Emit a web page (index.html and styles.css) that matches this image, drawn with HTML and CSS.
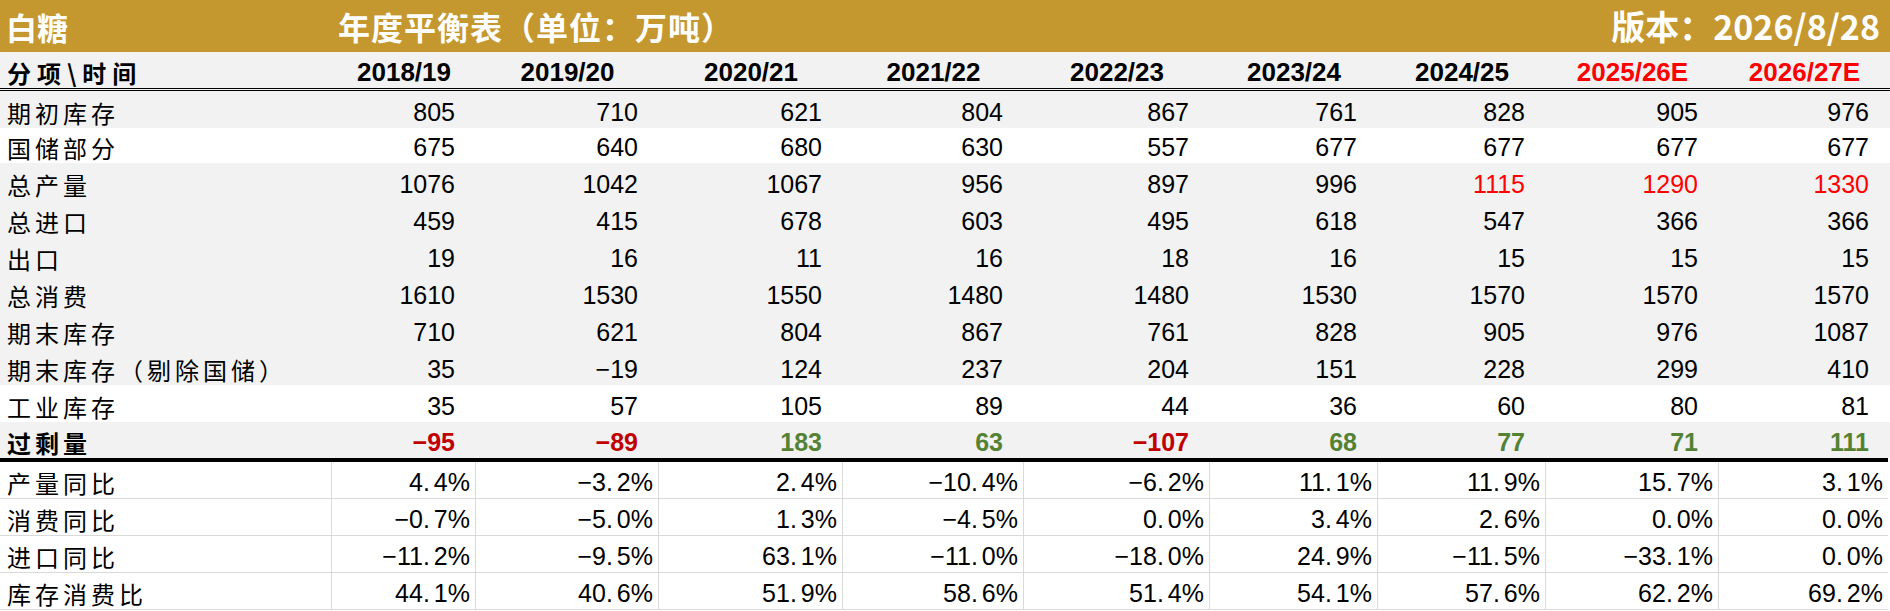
FILE: index.html
```html
<!DOCTYPE html>
<html lang="zh-CN">
<head>
<meta charset="utf-8">
<title>白糖 年度平衡表</title>
<link rel="stylesheet" href="styles.css">
</head>
<body>
<div class="sheet">
  <div class="banner">
    <span class="b-name">白糖</span>
    <span class="b-title">年度平衡表（单位：万吨）</span>
    <span class="b-ver">版本：2026/8/28</span>
  </div>

  <div class="row head">
    <div class="cell lbl">分项\时间</div>
    <div class="cell yr">2018/19</div>
    <div class="cell yr">2019/20</div>
    <div class="cell yr">2020/21</div>
    <div class="cell yr">2021/22</div>
    <div class="cell yr">2022/23</div>
    <div class="cell yr">2023/24</div>
    <div class="cell yr">2024/25</div>
    <div class="cell yr red">2025/26E</div>
    <div class="cell yr red">2026/27E</div>
  </div>

  <div class="row gray">
    <div class="cell lbl">期初库存</div>
    <div class="cell num">805</div><div class="cell num">710</div><div class="cell num">621</div><div class="cell num">804</div><div class="cell num">867</div><div class="cell num">761</div><div class="cell num">828</div><div class="cell num">905</div><div class="cell num">976</div>
  </div>
  <div class="row white short">
    <div class="cell lbl">国储部分</div>
    <div class="cell num">675</div><div class="cell num">640</div><div class="cell num">680</div><div class="cell num">630</div><div class="cell num">557</div><div class="cell num">677</div><div class="cell num">677</div><div class="cell num">677</div><div class="cell num">677</div>
  </div>
  <div class="row gray">
    <div class="cell lbl">总产量</div>
    <div class="cell num">1076</div><div class="cell num">1042</div><div class="cell num">1067</div><div class="cell num">956</div><div class="cell num">897</div><div class="cell num">996</div><div class="cell num red">1115</div><div class="cell num red">1290</div><div class="cell num red">1330</div>
  </div>
  <div class="row gray">
    <div class="cell lbl">总进口</div>
    <div class="cell num">459</div><div class="cell num">415</div><div class="cell num">678</div><div class="cell num">603</div><div class="cell num">495</div><div class="cell num">618</div><div class="cell num">547</div><div class="cell num">366</div><div class="cell num">366</div>
  </div>
  <div class="row gray">
    <div class="cell lbl">出口</div>
    <div class="cell num">19</div><div class="cell num">16</div><div class="cell num">11</div><div class="cell num">16</div><div class="cell num">18</div><div class="cell num">16</div><div class="cell num">15</div><div class="cell num">15</div><div class="cell num">15</div>
  </div>
  <div class="row gray">
    <div class="cell lbl">总消费</div>
    <div class="cell num">1610</div><div class="cell num">1530</div><div class="cell num">1550</div><div class="cell num">1480</div><div class="cell num">1480</div><div class="cell num">1530</div><div class="cell num">1570</div><div class="cell num">1570</div><div class="cell num">1570</div>
  </div>
  <div class="row gray">
    <div class="cell lbl">期末库存</div>
    <div class="cell num">710</div><div class="cell num">621</div><div class="cell num">804</div><div class="cell num">867</div><div class="cell num">761</div><div class="cell num">828</div><div class="cell num">905</div><div class="cell num">976</div><div class="cell num">1087</div>
  </div>
  <div class="row gray">
    <div class="cell lbl">期末库存（剔除国储）</div>
    <div class="cell num">35</div><div class="cell num">−19</div><div class="cell num">124</div><div class="cell num">237</div><div class="cell num">204</div><div class="cell num">151</div><div class="cell num">228</div><div class="cell num">299</div><div class="cell num">410</div>
  </div>
  <div class="row white">
    <div class="cell lbl">工业库存</div>
    <div class="cell num">35</div><div class="cell num">57</div><div class="cell num">105</div><div class="cell num">89</div><div class="cell num">44</div><div class="cell num">36</div><div class="cell num">60</div><div class="cell num">80</div><div class="cell num">81</div>
  </div>
  <div class="row gray surplus">
    <div class="cell lbl">过剩量</div>
    <div class="cell num neg">−95</div><div class="cell num neg">−89</div><div class="cell num pos">183</div><div class="cell num pos">63</div><div class="cell num neg">−107</div><div class="cell num pos">68</div><div class="cell num pos">77</div><div class="cell num pos">71</div><div class="cell num pos">111</div>
  </div>

  <div class="rule"></div>

  <div class="row ratio">
    <div class="cell lbl">产量同比</div>
    <div class="cell pct">4<span class="dp">.</span>4%</div><div class="cell pct">−3<span class="dp">.</span>2%</div><div class="cell pct">2<span class="dp">.</span>4%</div><div class="cell pct">−10<span class="dp">.</span>4%</div><div class="cell pct">−6<span class="dp">.</span>2%</div><div class="cell pct">11<span class="dp">.</span>1%</div><div class="cell pct">11<span class="dp">.</span>9%</div><div class="cell pct">15<span class="dp">.</span>7%</div><div class="cell pct">3<span class="dp">.</span>1%</div>
  </div>
  <div class="row ratio">
    <div class="cell lbl">消费同比</div>
    <div class="cell pct">−0<span class="dp">.</span>7%</div><div class="cell pct">−5<span class="dp">.</span>0%</div><div class="cell pct">1<span class="dp">.</span>3%</div><div class="cell pct">−4<span class="dp">.</span>5%</div><div class="cell pct">0<span class="dp">.</span>0%</div><div class="cell pct">3<span class="dp">.</span>4%</div><div class="cell pct">2<span class="dp">.</span>6%</div><div class="cell pct">0<span class="dp">.</span>0%</div><div class="cell pct">0<span class="dp">.</span>0%</div>
  </div>
  <div class="row ratio">
    <div class="cell lbl">进口同比</div>
    <div class="cell pct">−11<span class="dp">.</span>2%</div><div class="cell pct">−9<span class="dp">.</span>5%</div><div class="cell pct">63<span class="dp">.</span>1%</div><div class="cell pct">−11<span class="dp">.</span>0%</div><div class="cell pct">−18<span class="dp">.</span>0%</div><div class="cell pct">24<span class="dp">.</span>9%</div><div class="cell pct">−11<span class="dp">.</span>5%</div><div class="cell pct">−33<span class="dp">.</span>1%</div><div class="cell pct">0<span class="dp">.</span>0%</div>
  </div>
  <div class="row ratio">
    <div class="cell lbl">库存消费比</div>
    <div class="cell pct">44<span class="dp">.</span>1%</div><div class="cell pct">40<span class="dp">.</span>6%</div><div class="cell pct">51<span class="dp">.</span>9%</div><div class="cell pct">58<span class="dp">.</span>6%</div><div class="cell pct">51<span class="dp">.</span>4%</div><div class="cell pct">54<span class="dp">.</span>1%</div><div class="cell pct">57<span class="dp">.</span>6%</div><div class="cell pct">62<span class="dp">.</span>2%</div><div class="cell pct">69<span class="dp">.</span>2%</div>
  </div>
</div>
</body>
</html>
```

FILE: styles.css
```css
html, body {
  margin: 0;
  padding: 0;
  background: #ffffff;
}

.sheet {
  --cols: 332px 144px 183px 184px 181px 186px 168px 168px 173px 171px;
  width: 1890px;
  font-family: "Liberation Sans", Arial, sans-serif;
  color: #000000;
}

/* gold title bar */
.banner {
  display: grid;
  grid-template-columns: 332px 1fr auto;
  align-items: center;
  height: 52px;
  background: #c4982f;
  color: #ffffff;
  font-family: "Noto Sans CJK SC", sans-serif;
  font-weight: 700;
  font-size: 31px;
  line-height: 1;
}

.b-name {
  padding-left: 6px;
}

.b-title {
  padding-left: 6px;
  font-size: 32px;
  letter-spacing: 1px;
}

.b-ver {
  padding-right: 10px;
  font-size: 34px;
}

/* table rows */
.row {
  display: grid;
  grid-template-columns: var(--cols);
  height: 37px;
  box-sizing: border-box;
}

.row.gray {
  background: #f2f2f2;
}

.row.white {
  background: #ffffff;
}

.row.short {
  height: 35px;
}

.row.surplus {
  height: 36px;
}

.row.head {
  height: 39px;
  background: #f2f2f2;
  border-bottom: 3px double #000000;
}

.cell {
  display: flex;
  align-items: flex-end;
  box-sizing: border-box;
  padding-bottom: 3px;
  font-size: 25px;
  line-height: 1;
  white-space: nowrap;
}

.lbl {
  padding-left: 7px;
  font-family: "Noto Sans CJK SC", sans-serif;
  font-size: 24px;
  letter-spacing: 4px;
}

.head .lbl {
  font-weight: 700;
  letter-spacing: 6px;
}

.yr {
  justify-content: center;
  font-weight: 700;
  font-size: 26px;
}

.num {
  justify-content: flex-end;
  padding-right: 21px;
}

.red {
  color: #ff0000;
}

.surplus .lbl {
  font-weight: 700;
}

.surplus .num {
  font-weight: 700;
}

.neg {
  color: #c00000;
}

.pos {
  color: #548235;
}

.rule {
  width: 1888px;
  height: 4px;
  background: #000000;
}

.row.ratio {
  height: 37px;
}

.ratio .cell {
  border-bottom: 1px solid #d9d9d9;
  border-right: 1px solid #d9d9d9;
}

.ratio .cell:last-child {
  border-right: none;
  margin-right: 2px;
}

.pct {
  justify-content: flex-end;
  padding-right: 5px;
}

.dp {
  margin-right: 4px;
}
```
